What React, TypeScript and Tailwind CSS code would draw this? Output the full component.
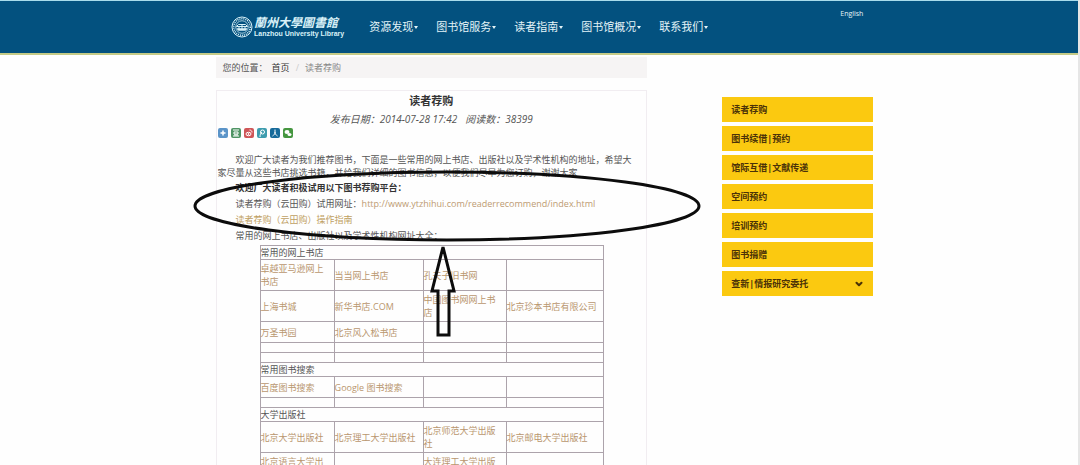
import { ChevronDown } from "lucide-react";
import { ReactNode } from "react";

const navItems = ["资源发现", "图书馆服务", "读者指南", "图书馆概况", "联系我们"];

const sideItems = [
  { label: "读者荐购" },
  { label: "图书续借|预约" },
  { label: "馆际互借|文献传递" },
  { label: "空间预约" },
  { label: "培训预约" },
  { label: "图书捐赠" },
  { label: "查新|情报研究委托", expandable: true },
];

const EMPTY = ["", "", "", ""];

const sections = [
  {
    title: "常用的网上书店",
    rows: [
      { cells: ["卓越亚马逊网上书店", "当当网上书店", "孔夫子旧书网", ""], height: "h-[31px]" },
      {
        cells: ["上海书城", "新华书店.COM", "中国图书网网上书店", "北京珍本书店有限公司"],
        height: "h-[31px]",
      },
      { cells: ["万圣书园", "北京风入松书店", "", ""], height: "h-[21px]" },
      { cells: EMPTY, height: "h-[10px]" },
      { cells: EMPTY, height: "h-[10px]" },
    ],
  },
  {
    title: "常用图书搜索",
    rows: [
      { cells: ["百度图书搜索", "Google 图书搜索", "", ""], height: "h-[21px]" },
      { cells: EMPTY, height: "h-[10px]" },
    ],
  },
  {
    title: "大学出版社",
    rows: [
      {
        cells: ["北京大学出版社", "北京理工大学出版社", "北京师范大学出版社", "北京邮电大学出版社"],
        height: "h-[31px]",
      },
      { cells: ["北京语言大学出版社", "", "大连理工大学出版社", ""], height: "h-[31px]" },
    ],
  },
];

function Logo() {
  return (
    <a href="#" className="flex items-center gap-px text-[#d9f1f8]">
      <svg viewBox="0 0 44 44" className="h-[22px] w-[22px]" fill="none" stroke="currentColor">
        <circle cx="22" cy="22" r="20" strokeWidth="2" />
        <circle cx="22" cy="22" r="16.5" strokeWidth="3" strokeDasharray="2 2" />
        <circle cx="22" cy="22" r="12.5" strokeWidth="1.5" />
        <path d="M11 21h22l-4-4H15zM13 27h18M16 21v5M22 16v10M28 21v5" strokeWidth="2" />
        <path d="M12 25h20l-3 4H15z" fill="currentColor" />
      </svg>
      <span className="flex flex-col whitespace-nowrap">
        <span className="text-[12px] leading-[14px] font-bold italic">蘭州大學圖書館</span>
        <span className="text-[7px] leading-[8px] font-bold font-['Liberation_Sans',sans-serif]">
          Lanzhou University Library
        </span>
      </span>
    </a>
  );
}

function Header() {
  return (
    <header className="flex h-[55px] items-start border-t border-b-2 border-t-[#a9dcec] border-b-[#c5cb87] bg-[#03517f] pl-[231px] text-[#e4f4f8]">
      <div className="flex h-[52px] items-center">
        <Logo />
      </div>
      <nav className="ml-[25px] flex h-[52px] items-center gap-[18px]">
        {navItems.map((item) => (
          <button key={item} className="flex items-center gap-px text-[11px] whitespace-nowrap">
            {item}
            <svg viewBox="0 0 4 3" className="h-[3px] w-1" fill="currentColor">
              <path d="M0 0h4L2 3z" />
            </svg>
          </button>
        ))}
      </nav>
      <a href="#" className="mt-2 ml-[132px] text-[7px] leading-[10px]">
        English
      </a>
    </header>
  );
}

function ShareIcon({ label, color, children }: { label: string; color: string; children: ReactNode }) {
  return (
    <button aria-label={label} className={`h-[10px] w-[10px] rounded-xs ${color}`}>
      <svg viewBox="0 0 20 20" className="h-full w-full" fill="none" stroke="#fff" strokeWidth="2">
        {children}
      </svg>
    </button>
  );
}

function ShareBar() {
  return (
    <div className="mt-px flex gap-[3px]">
      <ShareIcon label="分享" color="bg-[#5b94c8]">
        <path d="M10 5v10M5 10h10" strokeWidth="3" />
      </ShareIcon>
      <ShareIcon label="豆瓣" color="bg-[#4f9464]">
        <path d="M4 4h12M6 8h8v4H6zM4 16h12M8 12v4M12 12v4" />
      </ShareIcon>
      <ShareIcon label="微博" color="bg-[#cf5557]">
        <ellipse cx="9" cy="12" rx="5" ry="3.5" />
        <circle cx="9" cy="12" r="1" fill="#fff" />
        <path d="M11 4c3 0 5 2 5 5" />
      </ShareIcon>
      <ShareIcon label="腾讯微博" color="bg-[#3e9cae]">
        <circle cx="11" cy="8" r="4" />
        <path d="M10 8c-3 3-4 6-4 10" />
      </ShareIcon>
      <ShareIcon label="人人网" color="bg-[#176a9a]">
        <path d="M10 3v5c0 4-2 6-5 8M10 8c0 4 2 6 5 8" />
      </ShareIcon>
      <ShareIcon label="微信" color="bg-[#459640]">
        <ellipse cx="8" cy="8" rx="5" ry="4" fill="#fff" stroke="none" />
        <ellipse cx="13" cy="13" rx="4" ry="3" fill="#fff" stroke="none" />
      </ShareIcon>
    </div>
  );
}

function BookTable() {
  return (
    <table className="mt-px ml-[42px] w-[343px] table-fixed border-collapse leading-[13px] text-[#555]">
      <colgroup>
        <col className="w-[74px]" />
        <col className="w-[89px]" />
        <col className="w-[83px]" />
        <col className="w-[97px]" />
      </colgroup>
      {sections.map((section) => (
        <tbody key={section.title}>
          <tr>
            <th colSpan={4} className="border border-[#aca3ab] p-0 text-left font-normal">
              {section.title}
            </th>
          </tr>
          {section.rows.map((row, i) => (
            <tr key={i} className={row.height}>
              {row.cells.map((cell, j) => (
                <td key={j} className="border border-[#aca3ab] p-0 pr-1 align-middle">
                  {cell && (
                    <a href="#" className="block text-[#b9966e]">
                      {cell}
                    </a>
                  )}
                </td>
              ))}
            </tr>
          ))}
        </tbody>
      ))}
    </table>
  );
}

// hand-drawn circle and arrow lying over the article
function Annotation() {
  return (
    <svg
      viewBox="0 0 512 172"
      className="pointer-events-none absolute top-[78px] -left-[27px] h-[172px] w-[512px]"
      fill="none"
      stroke="#0c0c0c"
    >
      <ellipse cx="257" cy="37" rx="252" ry="34" strokeWidth="3" />
      <path d="M253 78l11 44h-5v44h-11v-44h-6z" strokeWidth="3" />
    </svg>
  );
}

function Article() {
  return (
    <article className="relative mt-3 border border-[#f1edf1] px-px">
      <h1 className="mt-[2px] text-center text-[11px] leading-[16px] font-bold text-[#333]">读者荐购</h1>
      <p className="mt-[2px] flex justify-center gap-2 text-[10px] leading-[16px] text-[#555] italic">
        <span>发布日期：2014-07-28 17:42</span>
        <span>阅读数：38399</span>
      </p>
      <ShareBar />
      <div className="mt-[15px] text-[9px] leading-[16px] text-[#555]">
        <p className="pr-3 indent-[18px] leading-[13px]">
          欢迎广大读者为我们推荐图书，下面是一些常用的网上书店、出版社以及学术性机构的地址，希望大家尽量从这些书店挑选书籍，并给我们详细的图书信息，以便我们尽早为您订购，谢谢大家
        </p>
        <p className="mt-px indent-[18px] font-bold text-[#333]">欢迎广大读者积极试用以下图书荐购平台：</p>
        <p className="indent-[18px]">
          读者荐购（云田购）试用网址：
          <a href="#" className="text-[#bd9b72]">
            http://www.ytzhihui.com/readerrecommend/index.html
          </a>
        </p>
        <p className="indent-[18px]">
          <a href="#" className="text-[#bfa062]">
            读者荐购（云田购）操作指南
          </a>
        </p>
        <p className="indent-[18px]">常用的网上书店、出版社以及学术性机构网址大全：</p>
        <BookTable />
      </div>
      <Annotation />
    </article>
  );
}

function SideMenu() {
  return (
    <aside className="col-start-4 mt-[42px]">
      <ul className="flex flex-col gap-1">
        {sideItems.map((item) => (
          <li key={item.label}>
            <a
              href="#"
              className="flex h-[25px] items-center justify-between bg-[#fbc910] px-[9px] text-[9px] font-bold text-[#4b3208]"
            >
              {item.label}
              {item.expandable && <ChevronDown className="h-[10px] w-[10px]" strokeWidth={5} />}
            </a>
          </li>
        ))}
      </ul>
    </aside>
  );
}

export default function App() {
  return (
    <div className="h-screen overflow-hidden border-r-2 border-[#e6e6e6] bg-[#fefefe] font-['Open_Sans','Noto_Sans_CJK_SC',sans-serif]">
      <Header />
      <main className="grid grid-cols-[20fr_40fr_7fr_14fr_19fr] items-start">
        <div className="col-start-2">
          <nav className="mt-[2px] flex h-[21px] items-center bg-[#f6f4f4] pl-[7px] text-[9px] text-[#555]">
            <span>您的位置：</span>
            <a href="#" className="ml-1 text-[#333]">
              首页
            </a>
            <span className="mx-[6px] text-[#ccc]">/</span>
            <span className="text-[#888]">读者荐购</span>
          </nav>
          <Article />
        </div>
        <SideMenu />
      </main>
    </div>
  );
}
